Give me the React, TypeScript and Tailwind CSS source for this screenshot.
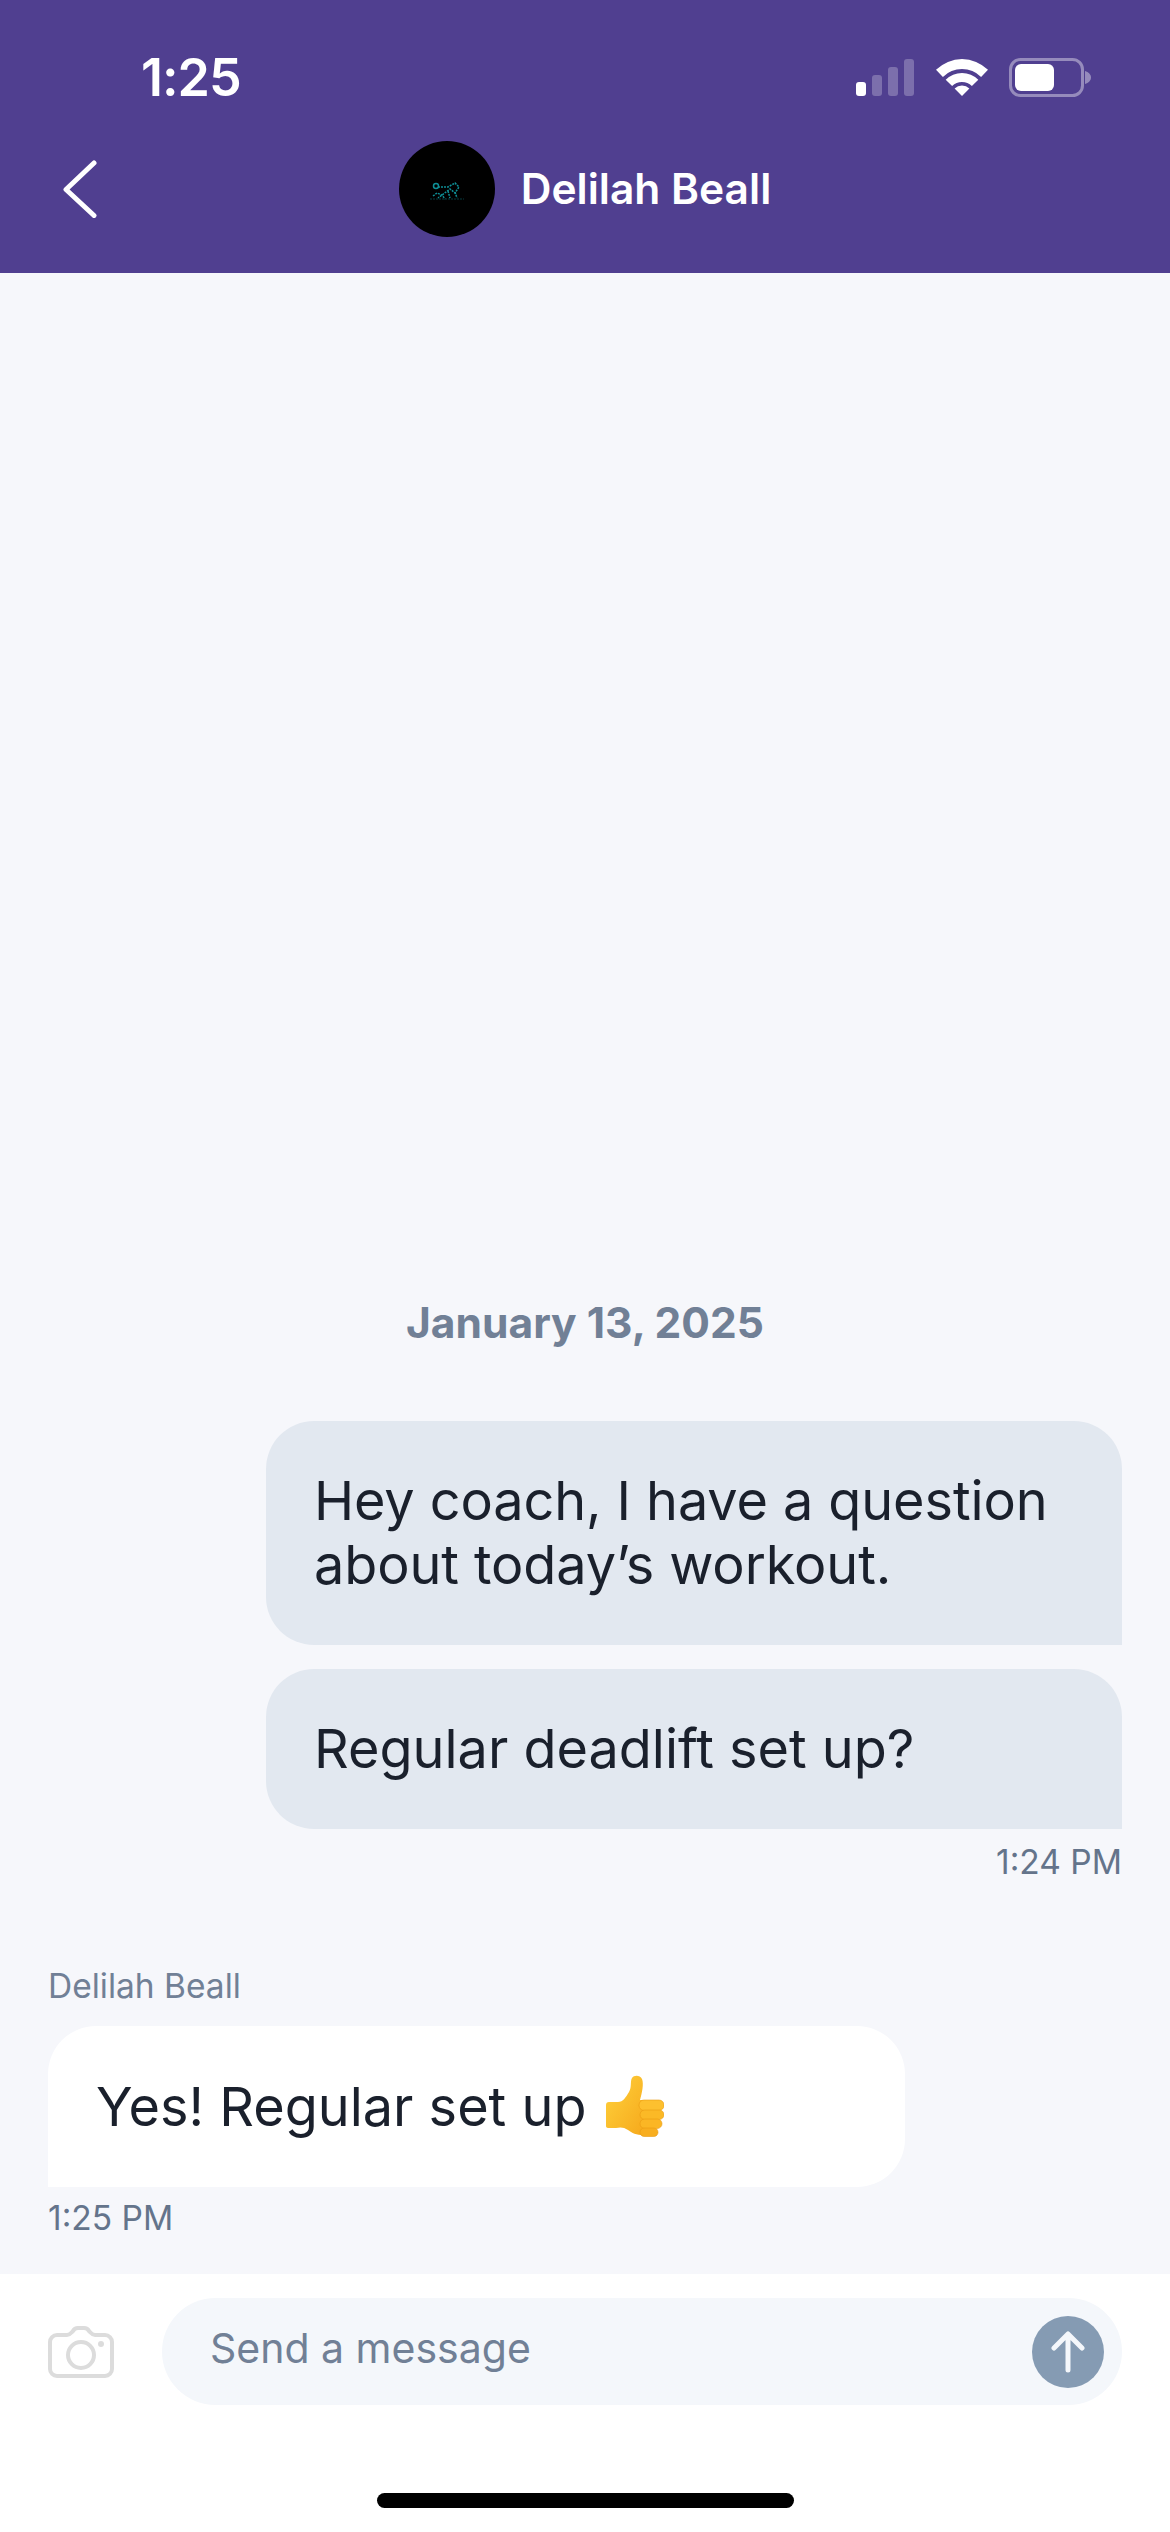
export default function App() {
  return (
    <div className="flex h-[2532px] w-[1170px] flex-col bg-white font-['Inter','Liberation_Sans',sans-serif]">
      <header className="flex h-[273px] shrink-0 flex-col bg-[#503f90] text-white">
        <div className="flex items-center justify-between pl-[141px] pr-[79px] pt-[58px]">
          <span className="text-[52px] font-semibold leading-[39px] tracking-[-1px]">1:25</span>
          <div className="flex items-center">
            <SignalIcon />
            <WifiIcon />
            <BatteryIcon />
          </div>
        </div>
        <div className="mt-[44px] grid grid-cols-[1fr_auto_1fr] items-center px-[63px]">
          <ChevronIcon />
          <div className="flex items-center gap-[26px]">
            <Avatar />
            <span className="text-[42.5px] font-semibold leading-[48px]">Delilah Beall</span>
          </div>
          <div />
        </div>
      </header>

      <main className="flex flex-1 flex-col justify-end bg-[#f6f7fb] px-[48px] pb-[37px]">
        <p className="pb-[5px] text-center text-[42.5px] font-bold leading-[50px] text-[#718096]">January 13, 2025</p>

        <div className="mt-[68px] flex flex-col items-end gap-[24px]">
          <div className="w-[856px] rounded-[48px] rounded-br-none bg-[#e2e8f0] p-[48px] text-[54px] leading-[64px] tracking-[-0.1px] text-[#1a202c]">
            Hey coach, I have a question about today’s workout.
          </div>
          <div className="w-[856px] rounded-[48px] rounded-br-none bg-[#e2e8f0] p-[48px] text-[54px] leading-[64px] text-[#1a202c]">
            Regular deadlift set up?
          </div>
        </div>
        <p className="mt-[14px] text-right text-[33.5px] leading-[38px] text-[#64748b]">1:24 PM</p>

        <p className="mt-[86px] text-[33.5px] leading-[38px] text-[#718096]">Delilah Beall</p>
        <div className="mt-[21px] flex h-[161px] w-[857px] items-center rounded-[48px] rounded-bl-none bg-white px-[48px] text-[54px] leading-[64px] text-[#1a202c]">
          Yes! Regular set up
          <ThumbIcon />
        </div>
        <p className="mt-[12px] text-[33.5px] leading-[38px] text-[#64748b]">1:25 PM</p>
      </main>

      <footer className="flex h-[258px] shrink-0 flex-col bg-white">
        <div className="mt-[24px] flex items-center gap-[48px] pl-[48px] pr-[48px]">
          <CameraIcon />
          <div className="flex h-[107px] flex-1 items-center justify-between rounded-full bg-[#f4f7fb] pl-[48px] pr-[18px]">
            <span className="pb-[6px] text-[41px] text-[#718096]">Send a message</span>
            <div className="flex h-[72px] w-[72px] items-center justify-center rounded-full bg-[#859bb3]">
              <svg width="34" height="42" viewBox="0 0 34 42" fill="none" stroke="#f4f7fb" strokeWidth="5" strokeLinecap="round" strokeLinejoin="round">
                <path d="M17 39V4M3 17L17 3l14 14" />
              </svg>
            </div>
          </div>
        </div>
        <div className="mt-[88px] h-[15px] w-[417px] self-center rounded-full bg-black" />
      </footer>
    </div>
  )
}

function SignalIcon() {
  return (
    <svg width="58" height="37" viewBox="0 0 58 37" fill="#fff">
      <rect x="0" y="23" width="10" height="14" rx="3" />
      <rect x="16" y="16" width="10" height="21" rx="3" fillOpacity="0.25" />
      <rect x="32" y="8" width="10" height="29" rx="3" fillOpacity="0.25" />
      <rect x="48" y="0" width="10" height="37" rx="3" fillOpacity="0.25" />
    </svg>
  )
}

function WifiIcon() {
  return (
    <svg className="ml-[22px]" width="52" height="37" viewBox="-0.5 0 52 37" fill="#fff">
      <path d="M-0.5 10.8A37 37 0 0 1 51.5 10.8L44.6 17.9A27 27 0 0 0 6.4 17.9Z" />
      <path d="M9.2 20.7A23 23 0 0 1 41.8 20.7L35.4 27.1A14 14 0 0 0 15.6 27.1Z" />
      <path d="M18.1 29.6A10.5 10.5 0 0 1 32.9 29.6L25.5 37Z" />
    </svg>
  )
}

function BatteryIcon() {
  return (
    <svg className="ml-[21px]" width="82" height="39" viewBox="0 0 82 39" fill="none">
      <rect x="1.5" y="1.5" width="72" height="36" rx="10" stroke="#fff" strokeOpacity="0.4" strokeWidth="3" />
      <rect x="6" y="6" width="39" height="27" rx="6" fill="#fff" />
      <path d="M76 13c3.5 1 6 3.500 6 6.500s-2.500 5.500-6 6.500z" fill="#fff" fillOpacity="0.4" />
    </svg>
  )
}

function ChevronIcon() {
  return (
    <svg width="34" height="58" viewBox="0 0 34 58" fill="none" stroke="#fff" strokeWidth="5" strokeLinecap="round" strokeLinejoin="round">
      <path d="M31 3L3 29.500L31 55.500" />
    </svg>
  )
}

function Avatar() {
  return (
    <div className="flex h-[96px] w-[96px] items-center justify-center rounded-full bg-black">
      <svg className="mt-[4px]" width="34" height="20" viewBox="0 0 34 20" fill="none" stroke="#0e8f96" strokeWidth="1.500" strokeDasharray="2 1">
        <circle cx="6" cy="5" r="2.500" strokeDasharray="none" />
        <path d="M8 6h10l7-4 4 4-4 6-5-4-12 9" />
        <path d="M3 15l4-3 5 2 3 4M18 10l2 7M25 11l2 6" />
        <path d="M0 18h34" strokeWidth="0.700" strokeOpacity="0.6" />
      </svg>
    </div>
  )
}

function ThumbIcon() {
  return (
    <svg className="ml-[20px] mt-[-2px]" width="58" height="62" viewBox="0 0 58 62">
      <defs>
        <linearGradient id="thumbFill" x1="0" y1="0" x2="1" y2="1">
          <stop offset="0" stopColor="#ffd23c" />
          <stop offset="1" stopColor="#f6a91c" />
        </linearGradient>
      </defs>
      <path
        d="M3 27H12C17 27 20 22 23 17C26 12 24 6 26 3C28 0 34 0 36 4C38 9 36 18 34 25H38V60C30 60 26 58 22 55C18 52 14 52 10 53H3C0 53 0 52 0 50V30C0 28 1 27 3 27Z"
        fill="url(#thumbFill)"
      />
      <rect x="33" y="25" width="25" height="10.500" rx="5" fill="#fdc02f" stroke="#ea9a12" strokeWidth="0.600" />
      <rect x="34" y="35" width="24" height="9.500" rx="4.700" fill="#fbb926" stroke="#ea9a12" strokeWidth="0.600" />
      <rect x="34" y="44" width="22" height="9.500" rx="4.700" fill="#fbb624" stroke="#ea9a12" strokeWidth="0.600" />
      <rect x="34" y="53" width="18" height="8.500" rx="4.200" fill="#f8ae1f" stroke="#ea9a12" strokeWidth="0.600" />
    </svg>
  )
}

function CameraIcon() {
  return (
    <svg className="shrink-0" width="66" height="52" viewBox="0 0 66 52" fill="none" stroke="#dcdcdc" strokeWidth="4">
      <path d="M9 9h10c3 0 4-2 6-4 1-2 3-3 5-3h6c2 0 4 1 5 3 2 2 3 4 6 4h10a7 7 0 0 1 7 7v27a7 7 0 0 1-7 7H9a7 7 0 0 1-7-7V16a7 7 0 0 1 7-7z" />
      <circle cx="33" cy="29" r="13" />
      <circle cx="53" cy="18" r="3" fill="#dcdcdc" stroke="none" />
    </svg>
  )
}
